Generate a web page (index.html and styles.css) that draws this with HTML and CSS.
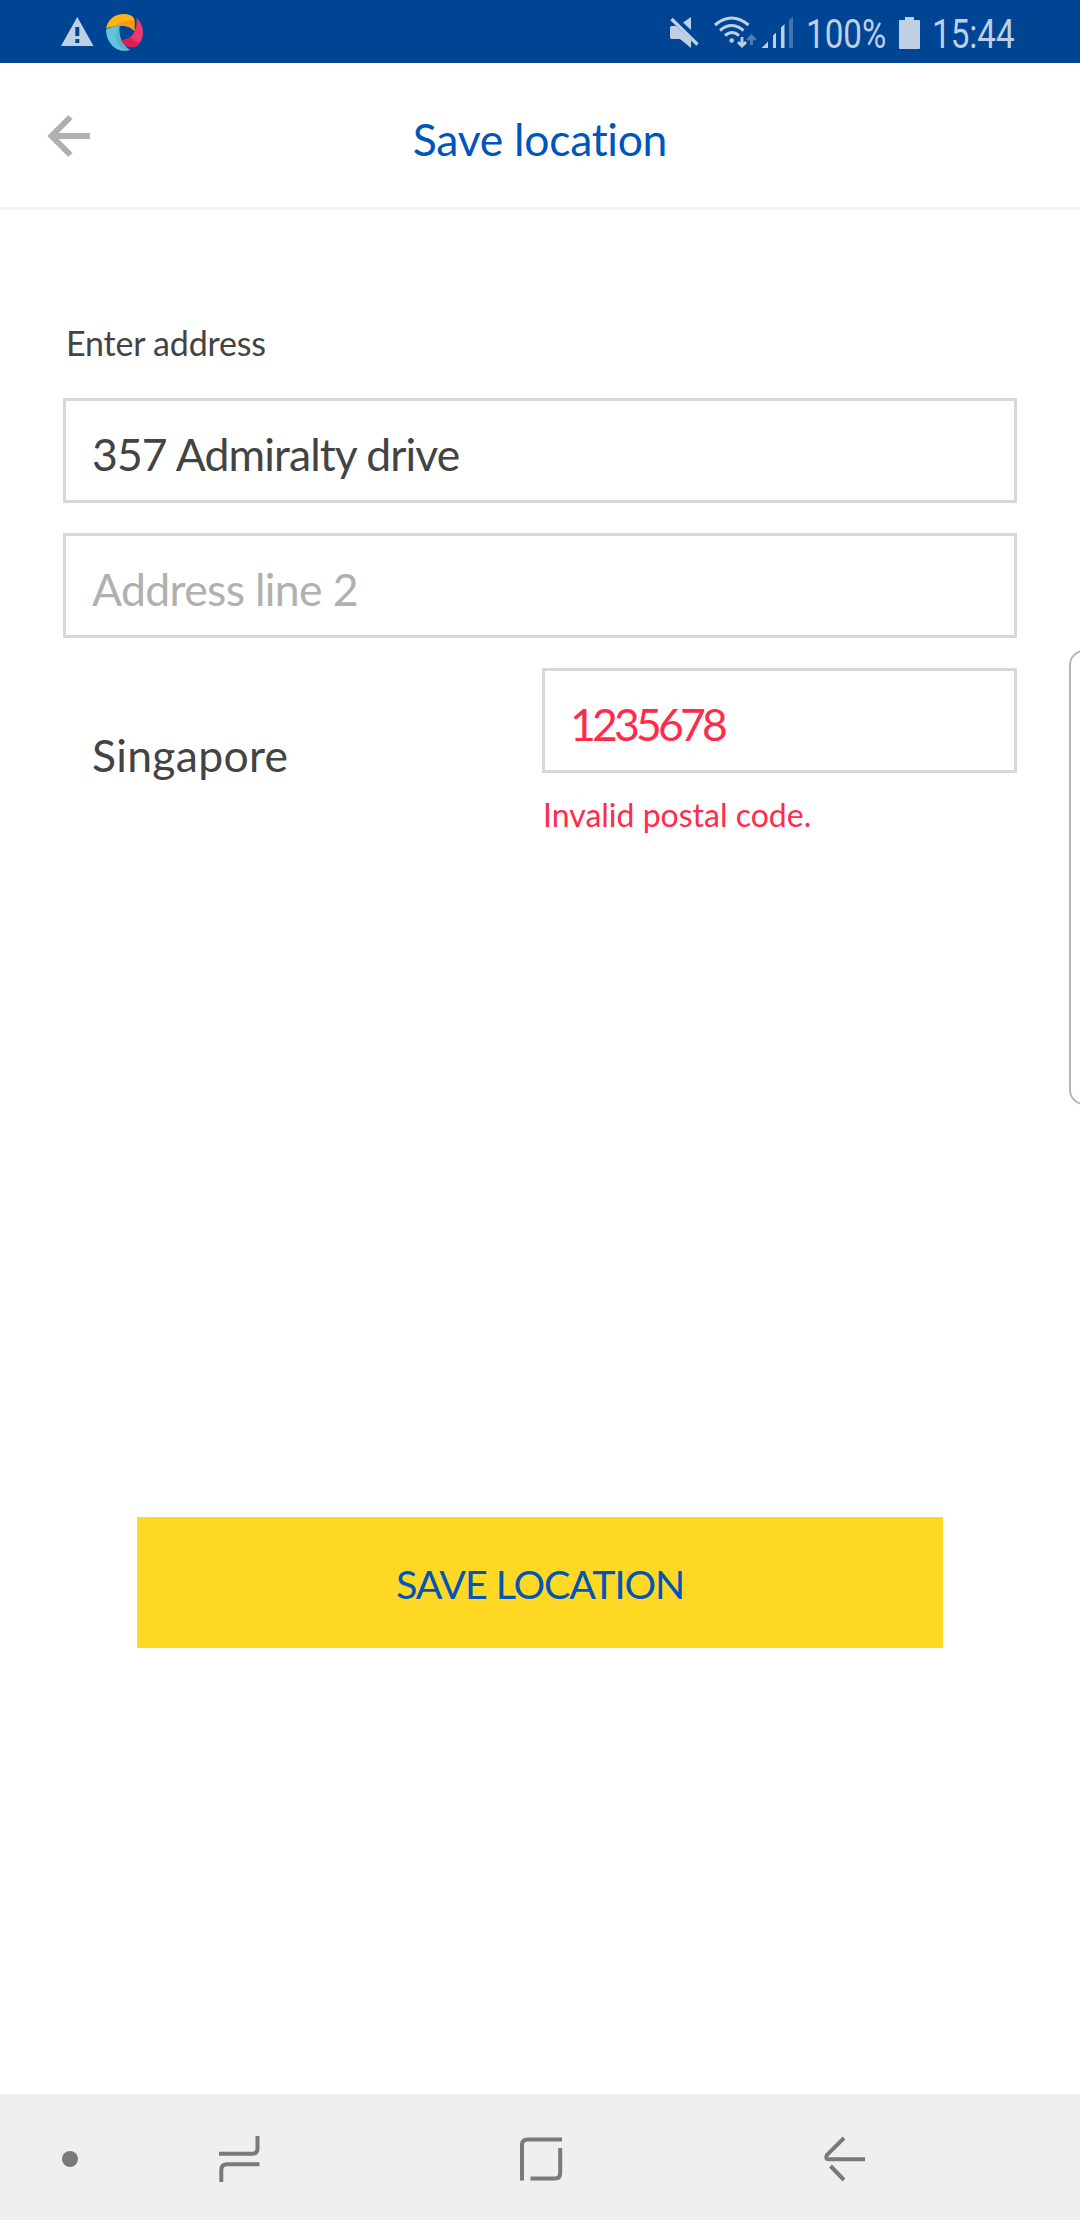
FILE: index.html
```html
<!DOCTYPE html>
<html lang="en">
<head>
<meta charset="utf-8">
<title>Save location</title>
<link rel="stylesheet" href="styles.css">
</head>
<body>
<div class="screen">
  <div class="status">
    <svg class="status-left" width="90" height="63" viewBox="60 0 90 63">
      <path fill="#bfd0e4" fill-rule="evenodd" d="M77.300 17L93.500 46H61ZM75.300 27V36H79.300V27ZM75.300 39V43H79.300V39Z"/>
      <path fill="#fdb515" d="M106 28.500C108 19 115 14 124 14C129 14 134.500 16 134.500 21V31C130 25 119 24 106 28.500Z"/>
      <path fill="#f79a0e" d="M113 26.500C121 21 128 20 134.500 20V31C130 26 122 24.500 113 26.500Z"/>
      <path fill="#62c3db" d="M106 29.500Q112 26 119.500 26C118 35 122 45 130 50C117 54 106 43 106 29.500Z"/>
      <path fill="#55b6d2" d="M119.500 26C118 35 122 45 130 50Q124 51 119 46C114 39 115 32 119.500 26Z"/>
      <path fill="#f0386f" d="M136.500 18C145 25 145 40 137 46C131 49 124 46 121 40C131 40 138 32 136.500 18Z"/>
      <path fill="#d92150" d="M121 40Q127 40 131 37Q134 42 140 43C134 50 124 47 121 40Z"/>
    </svg>
    <div class="status-right">
      <svg width="130" height="63" viewBox="669 0 130 63" fill="#bfd0e4">
        <path d="M691 17V30L683 22.500ZM671.500 26H676L691 40V48L680 39H671.500Q670 39 670 37V28Q670 26 671.500 26Z"/>
        <path d="M671.500 19L697.500 44.500" stroke="#bfd0e4" stroke-width="3.400"/>
        <g fill="none" stroke="#bfd0e4" stroke-width="3">
          <path d="M715 25Q731.500 11 748.500 25M720 30.500Q731.500 20.500 743.500 30.500M725 35.500Q732 29.500 739 35.500"/>
          <path d="M742 37V46M738 42L742 46L746 42" stroke-width="2.800"/>
          <path d="M751.500 45V36M747.500 40L751.500 36L755.500 40" stroke="#4e7fb3" stroke-width="2.800"/>
        </g>
        <circle cx="731.700" cy="40.500" r="2.300"/>
        <path d="M761.500 48L768 41.500V48ZM773 48V35.500L776 32.500V48ZM781 48V27.500L784.500 24V48Z"/>
        <path fill="#4173ae" d="M789 48V20L793 16.500V48Z"/>
      </svg>
      <span class="battery-text"><span class="narrow">100%</span></span>
      <svg class="battery" width="21" height="32" viewBox="0 0 21 32"><path fill="#bfd0e4" d="M6 0H15V3H20Q21 3 21 4V31Q21 32 20 32H1Q0 32 0 31V4Q0 3 1 3H6Z"/></svg>
      <span class="clock"><span class="narrow">15:44</span></span>
    </div>
  </div>

  <header class="header">
    <svg class="back" width="44" height="44" viewBox="0 0 44 44" fill="none" stroke="#b0b0b0" stroke-width="6"><path d="M43 22H5M23.500 3L4.500 22L23.500 41"/></svg>
    <h1 class="title">Save location</h1>
  </header>

  <main class="form">
    <div class="label">Enter address</div>
    <div class="field address">357 Admiralty drive</div>
    <div class="field placeholder">Address line 2</div>
    <div class="row">
      <div class="country">Singapore</div>
      <div class="postal">
        <div class="field invalid">1235678</div>
        <div class="error">Invalid postal code.</div>
      </div>
    </div>
    <div class="button" role="button">SAVE LOCATION</div>
  </main>

  <nav class="nav">
    <svg width="1080" height="126" viewBox="0 2094 1080 126" fill="none" stroke="#7a7a7a" stroke-width="4">
      <circle cx="70" cy="2159" r="8" fill="#7a7a7a" stroke="none"/>
      <path d="M219 2153.700H252.500Q257.500 2153.700 257.500 2148.500V2136M259.500 2164.200H227Q221.300 2164.200 221.300 2170V2182"/>
      <path d="M522 2180.500V2145Q522 2139.500 527.500 2139.500H562M560.200 2148V2173Q560.200 2178.500 555 2178.500H530.500"/>
      <path d="M844 2138L826.800 2155.200Q825 2159.200 828.500 2159.200H865M830.500 2166L844 2180"/>
    </svg>
  </nav>
  <div class="edge-handle"></div>
</div>
</body>
</html>
```

FILE: styles.css
```css
* { box-sizing: border-box; }
body { margin: 0; background: #fff; }
.screen {
  position: relative;
  display: flex;
  flex-direction: column;
  width: 1080px;
  height: 2220px;
  overflow: hidden;
  background: #fff;
  color: #434343;
  font-family: Lato, "Open Sans", sans-serif;
  font-size: 44.5px;
  font-variant-ligatures: none;
  white-space: nowrap;
}
svg { display: block; flex: none; }

.status {
  display: flex;
  justify-content: space-between;
  height: 63px;
  padding: 0 60px;
  background: #004494;
  color: #bfd0e4;
  font: 40px/63px Roboto, sans-serif;
}
.status-right { display: flex; width: 351px; }
.battery-text { width: 80px; margin-left: 7px; padding-top: 3px; }
.battery { margin: 17px 0 0 13px; }
.clock { width: 84px; margin-left: 12px; padding-top: 3px; }
.narrow { display: inline-block; transform: scaleX(.83); transform-origin: left; }

.header {
  display: grid;
  grid-template-columns: 48px 1fr 48px;
  align-items: center;
  height: 147px;
  border-bottom: 3px solid #f2f2f2;
}
.back { grid-column: 1; margin: 2px 0 0 47px; }
.title {
  grid-column: 2;
  margin: 0;
  padding-top: 7px;
  color: #0055b8;
  font-size: 44.5px;
  font-weight: 400;
  letter-spacing: -.3px;
  text-align: center;
}

.form { display: flex; flex: 1; flex-direction: column; padding: 106px 63px 0; }
.label { height: 54px; margin-bottom: 28px; padding-left: 3px; font-size: 34px; line-height: 54px; letter-spacing: -.2px; }
.field {
  height: 105px;
  margin-bottom: 30px;
  padding: 3px 26px 0;
  border: 3px solid #d8d8d8;
  line-height: 99px;
}
.address { letter-spacing: -.9px; }
.placeholder { color: #b0b0b0; letter-spacing: -.65px; }
.row { display: grid; grid-template-columns: 479px 1fr; height: 180px; }
.country { padding: 0 29px; line-height: 173px; letter-spacing: .3px; }
.postal .invalid { margin-bottom: 0; padding-left: 25px; color: #ff2b4b; letter-spacing: -3.8px; }
.error { padding-left: 1px; color: #ff2b4b; font-size: 32px; line-height: 83px; }
.button {
  height: 131px;
  margin: 669px 74px 0;
  padding-top: 1px;
  background: #ffd824;
  color: #0055b8;
  font-size: 39.5px;
  line-height: 131px;
  letter-spacing: -1.1px;
  text-align: center;
}

.nav { height: 126px; background: #efefef; }

.edge-handle {
  position: absolute;
  top: 650px;
  left: 1069px;
  width: 30px;
  height: 455px;
  border: 2px solid #b5b5b5;
  border-radius: 16px;
  background: #fff;
}
```
